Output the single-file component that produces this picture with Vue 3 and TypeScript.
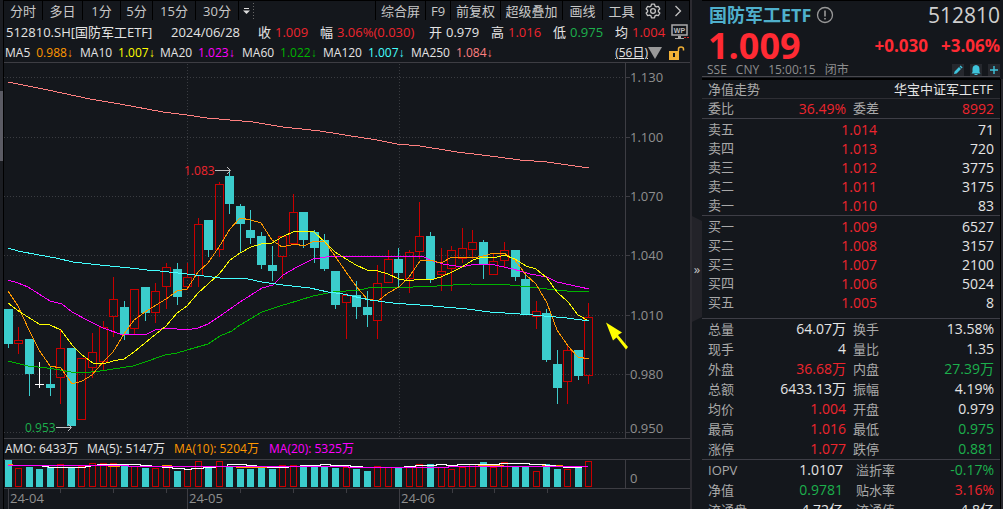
<script setup lang="ts">
type Candle = [kind: 'u' | 'd' | 'x', high: number, top: number, bottom: number, low: number, volTop: number]

const candles: Candle[] = [
  ['d', 309, 309, 344, 348, 460], ['u', 327, 340, 344, 354, 468], ['d', 339, 339, 374, 396, 467],
  ['x', 362, 384, 385, 388, 469], ['d', 367, 384, 388, 396, 467], ['u', 329, 348, 378, 404, 464],
  ['d', 348, 348, 426, 426, 467], ['u', 358, 358, 420, 420, 466], ['u', 333, 352, 368, 378, 463],
  ['u', 321, 327, 362, 370, 463], ['u', 277, 299, 317, 337, 463], ['d', 301, 307, 335, 340, 466],
  ['u', 289, 289, 329, 334, 466], ['d', 287, 287, 313, 321, 468], ['u', 283, 291, 313, 323, 468],
  ['u', 263, 267, 287, 309, 466], ['d', 263, 269, 297, 305, 471], ['u', 263, 277, 287, 290, 469],
  ['u', 218, 224, 276, 287, 461], ['d', 220, 220, 250, 257, 467], ['u', 182, 184, 250, 257, 461],
  ['d', 170, 176, 204, 214, 467], ['d', 204, 206, 224, 252, 469], ['d', 210, 230, 238, 244, 469],
  ['d', 232, 236, 265, 269, 467], ['d', 246, 265, 271, 281, 469], ['u', 236, 236, 257, 279, 465],
  ['u', 194, 212, 244, 244, 465], ['d', 212, 212, 240, 248, 467], ['d', 230, 232, 248, 263, 467],
  ['d', 234, 240, 269, 271, 466], ['d', 271, 271, 305, 309, 468], ['u', 293, 295, 303, 339, 467],
  ['d', 281, 295, 307, 319, 469], ['d', 291, 307, 315, 327, 471], ['u', 265, 283, 321, 339, 466],
  ['u', 250, 259, 283, 283, 467], ['d', 248, 259, 273, 287, 468], ['u', 250, 252, 279, 293, 467],
  ['u', 202, 236, 252, 259, 464], ['d', 232, 236, 279, 283, 464], ['u', 248, 271, 275, 291, 467],
  ['u', 246, 250, 269, 291, 469], ['u', 228, 248, 259, 263, 467], ['u', 230, 242, 250, 259, 464],
  ['d', 240, 242, 264, 279, 462], ['u', 254, 261, 275, 275, 467], ['u', 242, 250, 261, 267, 462],
  ['d', 250, 250, 277, 281, 467], ['d', 275, 279, 315, 315, 467], ['u', 301, 311, 317, 329, 471],
  ['d', 309, 313, 360, 362, 464], ['d', 350, 364, 388, 404, 469], ['u', 346, 350, 382, 404, 469],
  ['d', 350, 350, 376, 380, 468], ['u', 303, 317, 376, 384, 461],
]
const xAt = (i: number) => Math.floor(8 + i * 10.5636)

const averages = [
  { name: 'ma250', points: '8,82 48,90 90,99 120,104 163,112 187,115 207,118 230,120 253,122 283,127 320,131 345,135 377,140 397,144 420,146 457,152 490,156 520,160 547,162 589,168' },
  { name: 'ma60', points: '8,361 28,366 47,368 60,370 71,372 83,373 100,371 133,366 145,362 165,355 177,353 187,350 208,344 220,336 232,331 240,325 262,312 280,306 297,301 313,296 333,292 360,290 368,288 383,287 413,287 437,286 470,284 510,285 530,287 547,289 567,291 589,291' },
  { name: 'ma20', points: '8,280 18,283 28,287 50,301 62,304 72,312 87,320 103,328 123,335 147,334 155,330 167,328 187,330 198,328 208,324 220,316 240,302 262,288 273,285 283,275 297,267 313,259 333,256 360,256 378,257 390,256 422,256 430,260 443,264 462,267 475,264 490,264 513,269 530,274 547,277 557,282 589,289' },
  { name: 'ma5', points: '8,291 18,306 29,330 39,350 50,366 61,368 72,384 82,381 92,375 103,362 113,352 124,334 134,320 145,312 156,305 166,299 177,291 187,289 198,272 208,263 219,247 230,229 240,218 251,220 261,223 272,240 282,247 295,244 304,246 314,241 325,242 335,256 346,272 356,286 367,299 378,301 388,293 399,287 409,277 420,261 430,260 441,263 452,257 462,257 473,258 483,256 494,253 504,253 515,260 526,275 536,284 547,303 557,330 568,346 578,357 589,359' },
  { name: 'ma10', points: '8,303 20,312 39,324 50,325 61,330 72,345 82,355 93,363 103,364 113,361 124,359 134,352 145,343 156,334 166,326 177,313 187,306 198,293 208,284 220,273 230,260 240,253 251,247 261,244 272,243 282,237 295,231 314,232 325,242 335,252 346,259 356,265 367,270 378,271 388,274 399,279 409,281 420,279 430,280 441,277 452,272 462,267 473,260 483,257 494,258 504,255 515,259 526,266 536,269 547,278 557,292 568,302 578,315 589,321' },
  { name: 'ma120', points: '8,248 18,251 39,255 56,258 73,262 100,265 130,268 147,270 160,271 187,274 220,278 248,279 262,282 283,285 310,288 328,292 343,294 370,300 393,303 433,306 467,309 490,312 520,314 533,315 567,318 589,321' },
]

const priceAxis = [
  { y: 77, label: '1.130', ty: 77 }, { y: 137, label: '1.100', ty: 137 }, { y: 196, label: '1.070', ty: 196 },
  { y: 255, label: '1.040', ty: 255 }, { y: 315, label: '1.010', ty: 315 }, { y: 374, label: '0.980', ty: 374 },
  { y: 432, label: '0.950', ty: 428 },
]
const months = [{ x: 8, label: '24-04' }, { x: 187, label: '24-05' }, { x: 399, label: '24-06' }]
const weekTicks = [60, 113, 166, 240, 293, 346, 452, 494, 547]

const periods = ['分时', '多日', '1分', '5分', '15分', '30分']
const tools = ['综合屏', 'F9', '前复权', '超级叠加', '画线', '工具']

const quote = [
  { k: '收', v: '1.009', c: 'red' }, { k: '幅', v: '3.06%(0.030)', c: 'red' }, { k: '开', v: '0.979', c: 'white' },
  { k: '高', v: '1.016', c: 'red' }, { k: '低', v: '0.975', c: 'green' }, { k: '均', v: '1.004', c: 'red' },
]
const maLegend = [
  { k: 'MA5', v: '0.988', c: 't5' }, { k: 'MA10', v: '1.007', c: 't10' }, { k: 'MA20', v: '1.023', c: 't20' },
  { k: 'MA60', v: '1.022', c: 't60' }, { k: 'MA120', v: '1.007', c: 't120' }, { k: 'MA250', v: '1.084', c: 't250' },
]

const asks = [['卖五', '1.014', '71'], ['卖四', '1.013', '720'], ['卖三', '1.012', '3775'], ['卖二', '1.011', '3175'], ['卖一', '1.010', '83']]
const bids = [['买一', '1.009', '6527'], ['买二', '1.008', '3157'], ['买三', '1.007', '2100'], ['买四', '1.006', '5024'], ['买五', '1.005', '8']]

const stats = [
  ['总量', '64.07万', 'white', '换手', '13.58%', 'white'],
  ['现手', '4', 'white', '量比', '1.35', 'white'],
  ['外盘', '36.68万', 'red', '内盘', '27.39万', 'green'],
  ['总额', '6433.13万', 'white', '振幅', '4.19%', 'white'],
  ['均价', '1.004', 'red', '开盘', '0.979', 'white'],
  ['最高', '1.016', 'red', '最低', '0.975', 'green'],
  ['涨停', '1.077', 'red', '跌停', '0.881', 'green'],
]
const fund = [
  ['IOPV', '1.0107', 'white', '溢折率', '-0.17%', 'green'],
  ['净值', '0.9781', 'green', '贴水率', '3.16%', 'red'],
  ['流通盘', '4.72亿', 'white', '流通值', '4.8亿', 'white'],
]
</script>

<template>
  <div class="terminal">
    <div class="rail"><span class="rail-thumb"></span></div>

    <main class="chart-pane">
      <nav class="toolbar">
        <button v-for="p in periods" :key="p" type="button">{{ p }}</button>
        <button type="button" class="more" aria-label="更多周期">
          <svg width="16" height="18" viewBox="0 0 16 18">
            <path d="M4 6.500h5" stroke="#ddd" />
            <path d="M3 8.500h7l-3.500 3.500z" fill="#ddd" />
            <path d="M13.500 1v16" stroke="#666" stroke-dasharray="1 2" />
          </svg>
        </button>
        <span class="fill"></span>
        <button v-for="t in tools" :key="t" type="button">{{ t }}</button>
        <button type="button" aria-label="设置">
          <svg width="16" height="16" viewBox="0 0 16 16" fill="none" stroke="#c4c4c4" stroke-width="1.300" stroke-linejoin="round">
            <path d="M6.500 1.200h3l.5 1.900 1.400.8 1.900-.6 1.500 2.600-1.400 1.300v1.600l1.400 1.300-1.500 2.600-1.900-.6-1.400.8-.5 1.900h-3l-.5-1.900-1.400-.8-1.900.6L1.200 10.100l1.400-1.300V7.200L1.200 5.900l1.500-2.600 1.900.6L6 3.100z" />
            <circle cx="8" cy="8" r="2.400" />
          </svg>
        </button>
        <button type="button" aria-label="展开">
          <svg width="10" height="14" viewBox="0 0 10 14" fill="none" stroke="#c4c4c4" stroke-width="1.300"><path d="M2.500 2l5 5-5 5" /></svg>
        </button>
      </nav>

      <div class="quote-row">
        <span class="white">512810.SH[国防军工ETF]</span>
        <span class="white">2024/06/28</span>
        <span v-for="q in quote" :key="q.k" class="pair"><span class="white">{{ q.k }}</span><span :class="q.c">{{ q.v }}</span></span>
        <svg class="wp" width="18" height="16" viewBox="0 0 18 16">
          <rect x="1" y="1" width="15" height="10" fill="none" stroke="#aaa" stroke-width="1.500" />
          <path d="M7 12h3v2h3v1H4v-1h3z" fill="#aaa" />
          <text x="8.500" y="9" class="wp-text">WP</text>
          <path d="M13 13.500h5" stroke="#d02828" stroke-dasharray="2 1" />
        </svg>
      </div>

      <div class="ma-row">
        <span v-for="m in maLegend" :key="m.k" class="ma-item"><span class="white">{{ m.k }}</span><span :class="m.c">{{ m.v }}<i>↓</i></span></span>
        <span class="ma-end">
          <a href="#" class="days">(56日)</a>
          <svg width="14" height="12" viewBox="0 0 14 12"><path d="M0 0h14L7 12z" fill="#999" /></svg>
          <svg class="lock" width="16" height="14" viewBox="0 0 16 14">
            <rect x="0" y="5" width="10" height="9" fill="#f2b136" />
            <path d="M9.500 5V3q0-2 2.500-2t2.500 2v1.500" fill="none" stroke="#f2b136" stroke-width="1.500" />
            <path d="M5 7v4" stroke="#14171c" stroke-width="2" />
          </svg>
        </span>
      </div>

      <svg class="plot" height="375" viewBox="4 63 686 375" preserveAspectRatio="xMinYMin meet">
        <g shape-rendering="crispEdges">
          <path d="M4 62.500H690" class="rule" />
          <path v-for="a in priceAxis" :key="a.label" :d="`M4 ${a.y + 0.5}H625`" class="grid" />
          <path v-for="m in months.slice(1)" :key="m.x" :d="`M${m.x + 0.5} 64V438`" class="grid" />
          <path d="M625.500 63V438" class="rule" />
          <path v-for="a in priceAxis" :key="a.y" :d="`M626 ${a.y + 0.5}h4`" class="rule" />
          <g v-for="(c, i) in candles" :key="i">
            <template v-if="c[0] === 'd'">
              <rect :x="xAt(i)" :y="c[1]" width="1" :height="c[4] - c[1]" class="down" />
              <rect :x="xAt(i) - 4" :y="c[2]" width="9" :height="c[3] - c[2]" class="down" />
            </template>
            <template v-else-if="c[0] === 'u'">
              <rect :x="xAt(i)" :y="c[1]" width="1" :height="c[2] - c[1]" class="up-wick" />
              <rect :x="xAt(i)" :y="c[3]" width="1" :height="c[4] - c[3]" class="up-wick" />
              <rect :x="xAt(i) - 3.5" :y="c[2] + 0.5" width="8" :height="c[3] - c[2] - 1" class="up" />
            </template>
            <template v-else>
              <rect :x="xAt(i)" :y="c[1]" width="1" :height="c[4] - c[1]" fill="#fff" />
              <rect :x="xAt(i) - 4" :y="c[2]" width="9" height="1" fill="#fff" />
            </template>
          </g>
          <polyline v-for="m in averages" :key="m.name" :points="m.points" :class="['avg', m.name]" />
        </g>
        <text v-for="a in priceAxis" :key="a.label" x="630" :y="a.ty + 5" class="axis">{{ a.label }}</text>
        <text x="184" y="175" class="mark hi">1.083</text>
        <path d="M215 170.500h15M227 167l3.500 3.500-3.500 3.500" class="pointer" />
        <text x="25" y="432" class="mark lo">0.953</text>
        <path d="M56 427.500h15M68 424l3.500 3.500-3.500 3.500" class="pointer" />
        <path d="M606 322.500l16 10-4 2.500 10 12-2 2.500-9.500-12-3.500 3z" fill="#ff0" />
      </svg>

      <div class="amo-row">
        <span class="white">AMO: 6433万</span>
        <span class="white">MA(5): 5147万</span>
        <span class="t5">MA(10): 5204万</span>
        <span class="t20">MA(20): 5325万</span>
      </div>

      <svg class="plot" height="50" viewBox="4 459 686 50" preserveAspectRatio="xMinYMin meet">
        <g shape-rendering="crispEdges">
          <path d="M4 459.500H690M4 488.500H690M625.500 459V488" class="rule" />
          <template v-for="(c, i) in candles" :key="i">
            <rect v-if="c[0] === 'u'" :x="xAt(i) - 2.5" :y="c[5] + 0.5" width="6" :height="486 - c[5]" class="up" />
            <rect v-else :x="xAt(i) - 3" :y="c[5]" width="7" :height="487 - c[5]" class="down" />
          </template>
          <path d="M8 464.500h5M108 466.500h12M162 465.500h10M236 467.500h40M394 467.500h11M478 465.500h26M542 465.500h21" class="avg ma5" />
          <path d="M42 466.500h6v1H85v-1h5v-1h7v-1H140v1h11v1h11v1h10v1h12v1h7v-1h12v-1h12v-1h12v-2H246v1h10v1h11v1H288v-1h12v-1h20v-1h10v1h20v1h12v1H404v-1h11v-1h21v-1h10v1h11v-1H499v-1H529v1H545v1h10v1h8v1H581v-1h6" class="avg vma5" />
          <path d="M8 465.500h120v1h220v1h100v-1h140" class="avg ma20" />
          <path v-for="m in months" :key="m.x" :d="`M${m.x + 0.5} 489v20`" class="rule" />
          <path v-for="t in weekTicks" :key="t" :d="`M${t + 0.5} 489v4`" class="rule" />
        </g>
        <text x="630" y="483" class="axis">0</text>
        <text v-for="m in months" :key="m.label" :x="m.x + 2" y="503" class="axis">{{ m.label }}</text>
      </svg>
    </main>

    <button type="button" class="collapse" aria-label="收起"><span>»</span></button>

    <aside class="side">
      <header class="head">
        <div class="line1">
          <h1>国防军工ETF</h1>
          <svg width="18" height="18" viewBox="0 0 18 18" fill="none" stroke="#999" stroke-width="1.300">
            <circle cx="9" cy="9" r="7.500" /><path d="M9 4.500v6M9 12v1.500" stroke-width="1.600" />
          </svg>
          <span class="code">512810</span>
        </div>
        <div class="line2">
          <strong class="last">1.009</strong>
          <strong class="chg">+0.030</strong>
          <strong class="chg">+3.06%</strong>
        </div>
        <div class="line3">
          <span>SSE</span><span>CNY</span><span>15:00:15</span><span>闭市</span>
          <span class="fill"></span>
          <button type="button" aria-label="编辑"><svg width="12" height="12" viewBox="0 0 12 12"><path d="M2 10l.6-2.600L7 3l2 2-4.400 4.400zM7.600 2.400l1-1 2 2-1 1z" fill="#3fc4dc" /></svg></button>
          <button type="button" aria-label="提醒"><svg width="12" height="12" viewBox="0 0 12 12"><path d="M6 1q3.500.5 3.500 4v3l1 1.500h-9l1-1.500V5Q2.500 1.500 6 1zM4.500 10h3v1h-3z" fill="#3fc4dc" /></svg></button>
          <button type="button" aria-label="添加"><svg width="12" height="12" viewBox="0 0 12 12"><path d="M6 2v8M2 6h8" stroke="#3fc4dc" stroke-width="1.400" /></svg></button>
        </div>
      </header>

      <div class="nav-row"><span class="lbl">净值走势</span><span class="fill"></span><span class="white">华宝中证军工ETF</span></div>

      <table class="grid4 ratio">
        <tbody><tr><th>委比</th><td class="red">36.49%</td><th>委差</th><td class="red">8992</td></tr></tbody>
      </table>

      <table class="book asks">
        <tbody><tr v-for="r in asks" :key="r[0]"><th>{{ r[0] }}</th><td class="red">{{ r[1] }}</td><td class="white">{{ r[2] }}</td></tr></tbody>
      </table>
      <table class="book bids">
        <tbody><tr v-for="r in bids" :key="r[0]"><th>{{ r[0] }}</th><td class="red">{{ r[1] }}</td><td class="white">{{ r[2] }}</td></tr></tbody>
      </table>

      <table class="grid4 stats">
        <tbody><tr v-for="r in stats" :key="r[0]"><th>{{ r[0] }}</th><td :class="r[2]">{{ r[1] }}</td><th>{{ r[3] }}</th><td :class="r[5]">{{ r[4] }}</td></tr></tbody>
      </table>
      <table class="grid4 fund">
        <tbody><tr v-for="r in fund" :key="r[0]"><th>{{ r[0] }}</th><td :class="r[2]">{{ r[1] }}</td><th>{{ r[3] }}</th><td :class="r[5]">{{ r[4] }}</td></tr></tbody>
      </table>
    </aside>
    <div class="edge"></div>
  </div>
</template>

<style>
body { margin: 0; background: #14171c; }
</style>

<style scoped>
.terminal {
  display: grid;
  grid-template-columns: 3px minmax(0, 1fr) 12px 298px 3px;
  height: 100vh;
  overflow: hidden;
  background: #14171c;
  color: #a9a9a9;
  font-family: "Open Sans", "Noto Sans CJK SC", sans-serif;
  font-size: 13px;
  line-height: 20px;
  white-space: nowrap;
}
button { font: inherit; color: inherit; background: none; border: 0; padding: 0; margin: 0; display: flex; align-items: center; justify-content: center; }
.white { color: #e4e4e4; }
.red { color: #ee252e; }
.green { color: #1cb04c; }
.t5 { color: #ff9800; }
.t10 { color: #ff0; }
.t20 { color: #f0f; }
.t60 { color: #00b400; }
.t120 { color: #4ff; }
.t250 { color: #ff8080; }
.fill { flex: 1; }

.rail { background: #1b1d22; padding-top: 91px; }
.rail-thumb { display: block; height: 70px; background: #5b5b64; }

.chart-pane { border-left: 1px solid #000; min-width: 0; }
.toolbar {
  display: grid;
  grid-template-columns: 39px 40px 38px 32px 43px 43px 18px 1fr 50px 25px 50px 62px 40px 38px 25px 24px;
  height: 19px;
  border-top: 1px solid #000;
  color: #c8c8c8;
}
.toolbar button { border-right: 1px solid #000; line-height: 18px; }
.toolbar .more { border-right: 0; }
.toolbar .fill { border-right: 1px solid #000; }
.quote-row {
  display: grid;
  grid-template-columns: 165px 87px 62px 109px 62px 62px 62px 56px 18px;
  align-items: center;
  height: 24px;
  padding-left: 2px;
}
.pair { display: flex; gap: 4px; }
.wp-text { font: bold 7px "Liberation Sans", sans-serif; fill: #bbb; text-anchor: middle; }
.ma-row {
  display: grid;
  grid-template-columns: 75px 80px 82px 81px 88px 80px 1fr;
  align-items: center;
  height: 17px;
  padding: 0 0 2px 1px;
  font-size: 12px;
  line-height: 17px;
}
.ma-item { display: flex; gap: 6px; }
.ma-item i { font-family: "Liberation Sans", sans-serif; font-style: normal; font-size: 12px; line-height: 12px; }
.ma-end { display: flex; align-items: center; justify-content: flex-end; padding-right: 5px; }
.days { color: #e4e4e4; text-decoration: underline; }
.lock { margin-left: 7px; }
.plot { display: block; width: 100%; overflow: visible; }
.rule { stroke: #3d3d43; fill: none; }
.grid { stroke: #3a3c41; stroke-dasharray: 1 2; fill: none; }
.down { fill: #3bcccc; }
.up { fill: none; stroke: #c80000; }
.up-wick { fill: #c80000; }
.avg { fill: none; stroke-width: 1; }
.ma5 { stroke: #ff9800; }
.ma10 { stroke: #ff0; }
.ma20 { stroke: #f0f; }
.ma60 { stroke: #00b400; }
.ma120 { stroke: #4ff; }
.ma250 { stroke: #ff8080; }
.vma5 { stroke: #fff; }
.axis { font-size: 13px; fill: #8f8f8f; }
.mark { font-size: 12px; }
.hi { fill: #ee252e; }
.lo { fill: #1cb04c; }
.pointer { fill: none; stroke: #c0c0c0; }
.amo-row {
  display: grid;
  grid-template-columns: 82px 87px 95px 1fr;
  align-items: center;
  height: 20px;
  padding-left: 1px;
  border-top: 1px solid #3d3d43;
  font-size: 12px;
}

.collapse {
  align-self: start;
  flex-direction: column;
  width: 12px;
  height: 100vh;
  border-left: 2px solid #2c2b31;
  border-right: 0;
}
.collapse span {
  display: flex;
  align-items: center;
  justify-content: center;
  width: 10px;
  height: 106px;
  margin-top: 29px;
  background: #232329;
  clip-path: polygon(0 0, 100% 5px, 100% 101px, 0 100%);
  color: #c4c4c4;
}

.side { min-width: 0; border-top: 1px solid #000; }
.head { height: 76px; border-bottom: 1px solid #48484e; box-sizing: border-box; }
.line1 { display: flex; align-items: center; height: 28px; padding-left: 7px; gap: 5px; }
h1 { margin: 0; font-size: 18px; font-weight: 700; color: #4fb0cc; }
.code { margin-left: auto; font-size: 21px; color: #cfcfcf; }
.line2 { display: flex; align-items: center; height: 34px; padding-left: 6px; gap: 13px; color: #ff2a33; line-height: 32px; }
.last { font-size: 36px; margin-right: auto; }
.chg { font-size: 17px; line-height: 20px; }
.line3 { display: flex; align-items: center; height: 13px; padding-left: 5px; gap: 9px; font-size: 12px; line-height: 13px; color: #8e8e8e; }
.line3 button { width: 12px; height: 12px; background: #26282e; }
.line3 button + button { margin-left: -3px; }
.nav-row { display: flex; align-items: center; height: 18px; padding: 0 7px 0 6px; border-top: 2px solid #000; border-bottom: 1px solid #2e2e34; margin-top: 1px; }
table { width: 100%; border-collapse: separate; border-spacing: 0; table-layout: fixed; }
th { padding: 0; font-weight: 400; text-align: left; }
td { padding: 0; text-align: right; font-size: 14px; }
.book { border-bottom: 1px solid #3e3e46; }
.book tr { height: 19px; }
.book th, .book td { line-height: 19px; }
.book th { width: 50px; padding-left: 6px; }
.book td:nth-child(2) { width: 119px; }
.book td:last-child, .grid4 td:last-child { padding-right: 6px; }
.asks { padding-top: 1px; }
.bids { padding: 1px 0 6px; }
.grid4 th:first-child { width: 50px; padding-left: 6px; }
.grid4 td:nth-child(2) { width: 88px; }
.grid4 th:nth-child(3) { width: 50px; padding-left: 7px; }
.ratio { border-bottom: 1px solid #3e3e46; }
.ratio th, .ratio td { line-height: 19px; }
.stats { border-bottom: 1px solid #3e3e46; }
.fund td:nth-child(2) { width: 85px; }
.fund th:nth-child(3) { padding-left: 13px; }

.edge { margin-top: 79px; border-left: 1px solid #000; background: #28282e; }
</style>
